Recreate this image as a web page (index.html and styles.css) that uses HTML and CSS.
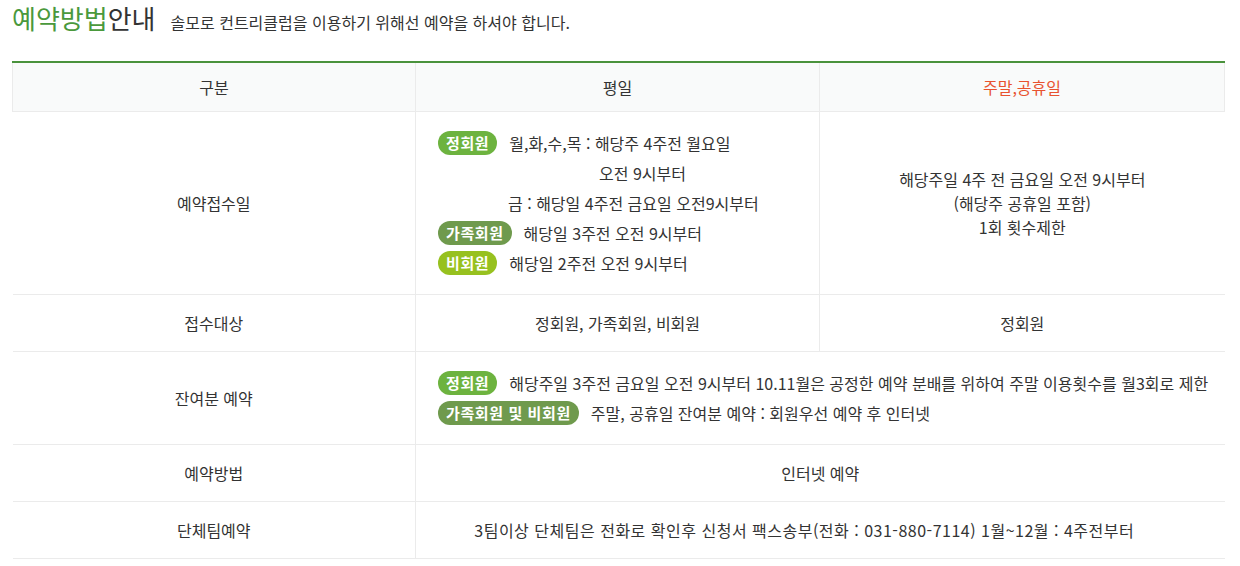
FILE: index.html
```html
<!DOCTYPE html>
<html lang="ko">
<head>
<meta charset="utf-8">
<link rel="stylesheet" href="styles.css">
</head>
<body>
<div class="wrap">
  <div class="title">
    <h2><span class="green">예약방법</span>안내</h2>
    <p class="sub">솔모로 컨트리클럽을 이용하기 위해선 예약을 하셔야 합니다.</p>
  </div>
  <table class="tbl">
    <colgroup><col class="c1"><col class="c2"><col class="c3"></colgroup>
    <thead>
      <tr><th>구분</th><th>평일</th><th class="red">주말,공휴일</th></tr>
    </thead>
    <tbody>
      <tr class="r1">
        <td>예약접수일</td>
        <td class="left">
          <div class="line"><span class="badge b1">정회원</span><span class="txt">월,화,수,목 : 해당주 4주전 월요일</span></div>
          <div class="line ind2">오전 9시부터</div>
          <div class="line ind3">금 : 해당일 4주전 금요일 오전9시부터</div>
          <div class="line"><span class="badge b2">가족회원</span><span class="txt">해당일 3주전 오전 9시부터</span></div>
          <div class="line"><span class="badge b3">비회원</span><span class="txt">해당일 2주전 오전 9시부터</span></div>
        </td>
        <td class="multi">해당주일 4주 전 금요일 오전 9시부터<br>(해당주 공휴일 포함)<br>1회 횟수제한</td>
      </tr>
      <tr class="r2">
        <td>접수대상</td>
        <td>정회원, 가족회원, 비회원</td>
        <td>정회원</td>
      </tr>
      <tr class="r3">
        <td>잔여분 예약</td>
        <td colspan="2" class="left">
          <div class="line"><span class="badge b1">정회원</span><span class="txt">해당주일 3주전 금요일 오전 9시부터 10.11월은 공정한 예약 분배를 위하여 주말 이용횟수를 월3회로 제한</span></div>
          <div class="line"><span class="badge b2">가족회원 및 비회원</span><span class="txt">주말, 공휴일 잔여분 예약 : 회원우선 예약 후 인터넷</span></div>
        </td>
      </tr>
      <tr class="r2">
        <td>예약방법</td>
        <td colspan="2">인터넷 예약</td>
      </tr>
      <tr class="r2">
        <td>단체팀예약</td>
        <td colspan="2" class="wide">3팀이상 단체팀은 전화로 확인후 신청서 팩스송부(전화 : 031-880-7114) 1월~12월 : 4주전부터</td>
      </tr>
    </tbody>
  </table>
</div>
</body>
</html>
```

FILE: styles.css
```css
* { box-sizing: border-box; }
html, body { margin: 0; padding: 0; background: #fff; }
body {
  font-family: "Noto Sans CJK KR", "Noto Sans", sans-serif;
  color: #333;
  font-size: 16px;
}
.wrap { padding: 0 16px 0 12px; }
.title {
  display: flex;
  align-items: baseline;
  height: 61px;
}
.title h2 {
  margin: 0;
  font-size: 26px;
  font-weight: 400;
  line-height: 36px;
  color: #333;
}
.title .green { color: #4a993c; }
.title .sub {
  margin: 0 0 0 15px;
  font-size: 16px;
  line-height: 36px;
  color: #333;
}
.tbl {
  width: 1212px;
  border-collapse: collapse;
  border-top: 2px solid #4a923c;
  table-layout: fixed;
}
.c1 { width: 403px; }
.c2 { width: 404px; }
.c3 { width: 405px; }
.tbl th {
  height: 49px;
  background: #f9fafa;
  border: 1px solid #ebebeb;
  border-top: 0;
  font-weight: 400;
  font-size: 16px;
  color: #333;
  padding: 0;
}
.tbl th.red { color: #e8522f; }
.tbl td {
  text-align: center;
  border-bottom: 1px solid #ebebeb;
  padding: 0;
  vertical-align: middle;
  line-height: 20px;
}
.tbl td + td { border-left: 1px solid #ebebeb; }
.tbl tr.r1 td { height: 183px; }
.tbl tr.r2 td { height: 57px; }
.tbl tr.r3 td { height: 93px; }
.tbl td.left { text-align: left; padding-left: 22px; }
.tbl td.multi { line-height: 24px; }
.tbl td.wide { letter-spacing: 0.5px; padding-right: 32px; }
.line {
  display: flex;
  align-items: center;
  height: 30px;
  white-space: nowrap;
}
.ind2 { padding-left: 161px; }
.ind3 { padding-left: 70px; }
.badge {
  display: inline-block;
  height: 24px;
  line-height: 24px;
  padding: 0 8px;
  border-radius: 12px;
  color: #fff;
  font-weight: 700;
  font-size: 15px;
  letter-spacing: 0.6px;
}
.b1 { background: #6db33f; }
.b2 { background: #6f9a4d; }
.b3 { background: #97c11f; }
.txt { margin-left: 12px; }
```
